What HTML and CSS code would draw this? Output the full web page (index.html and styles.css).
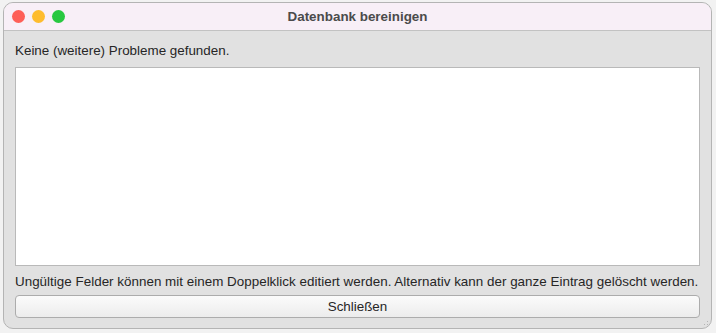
FILE: index.html
```html
<!DOCTYPE html>
<html lang="de">
<head>
    <meta charset="UTF-8">
    <title>Datenbank bereinigen</title>
    <link rel="stylesheet" href="styles.css">
</head>
<body>
    <div class="window">
        <div class="titlebar">
            <div class="lights">
                <span class="light red"></span>
                <span class="light yellow"></span>
                <span class="light green"></span>
            </div>
            <div class="title">Datenbank bereinigen</div>
        </div>
        <div class="content">
            <p class="label">Keine (weitere) Probleme gefunden.</p>
            <div class="listbox"></div>
            <p class="label hint">Ungültige Felder können mit einem Doppelklick editiert werden. Alternativ kann der ganze Eintrag gelöscht werden.</p>
            <button class="close">Schließen</button>
        </div>
        <div class="grip"></div>
    </div>
</body>
</html>
```

FILE: styles.css
```css
body {
    margin: 0;
    background-color: #f2f2f2;
    font-family: "Liberation Sans", Arial, sans-serif;
    font-size: 13.4px;
    color: #262626;
}

.window {
    position: relative;
    box-sizing: border-box;
    width: 709px;
    height: 327px;
    margin: 2px 0 0 3px;
    border: 1px solid #b4b4b4;
    border-radius: 10px;
    background-color: #e1e1e1;
    overflow: hidden;
    display: flex;
    flex-direction: column;
}

.titlebar {
    position: relative;
    flex-shrink: 0;
    height: 27px;
    background-color: #f8eff7;
    border-bottom: 1px solid #c2c2c2;
    display: flex;
    align-items: center;
    justify-content: center;
}

.lights {
    position: absolute;
    left: 8px;
    top: 7px;
    display: flex;
    gap: 7px;
}

.light {
    width: 13px;
    height: 13px;
    border-radius: 50%;
}

.red { background-color: #fe5f57; }
.yellow { background-color: #febc2e; }
.green { background-color: #28c840; }

.title {
    font-weight: bold;
    color: #4b4b4b;
}

.content {
    flex: 1;
    padding: 0 11px;
    display: flex;
    flex-direction: column;
}

.label {
    margin: 12px 0 0;
    line-height: 16px;
    white-space: nowrap;
}

.listbox {
    flex-shrink: 0;
    margin-top: 8px;
    height: 197px;
    background-color: #fff;
    border: 1px solid #b9b9b9;
}

.hint {
    margin-top: 8px;
    letter-spacing: 0.02px;
}

.close {
    flex-shrink: 0;
    margin-top: 5px;
    height: 23px;
    border: 1px solid #acacac;
    border-radius: 4px;
    background: linear-gradient(#fbfbfb, #ececec);
    font-family: inherit;
    font-size: 13.4px;
    color: #262626;
}

.grip {
    position: absolute;
    right: 1px;
    bottom: 1px;
    width: 10px;
    height: 10px;
    background-image: radial-gradient(circle, #b4b4b4 0.8px, transparent 1px);
    background-size: 3px 3px;
    clip-path: polygon(100% 0, 100% 100%, 0 100%);
}
```
